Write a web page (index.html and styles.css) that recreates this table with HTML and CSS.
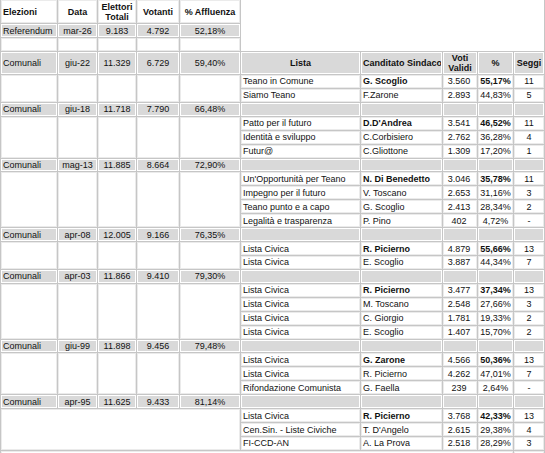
FILE: index.html
```html
<!DOCTYPE html>
<html lang="it">
<head>
<meta charset="utf-8">
<title>Elezioni Teano</title>
<link rel="stylesheet" href="styles.css">
</head>
<body>
<table class="sheet">
  <colgroup>
    <col class="w-ele"><col class="w-data"><col class="w-tot"><col class="w-vot"><col class="w-aff">
    <col class="w-lista"><col class="w-cand"><col class="w-voti"><col class="w-perc"><col class="w-seg">
  </colgroup>
  <tbody>
    <tr class="rh">
      <td class="b">Elezioni</td>
      <td class="b c">Data</td>
      <td class="b c">Elettori<br>Totali</td>
      <td class="b c">Votanti</td>
      <td class="b c">% Affluenza</td>
      <td class="blank" colspan="5" rowspan="3"></td>
    </tr>
    <tr class="r13 g">
      <td>Referendum</td><td class="c">mar-26</td><td class="c">9.183</td><td class="c">4.792</td><td class="c">52,18%</td>
    </tr>
    <tr class="r13">
      <td></td><td></td><td></td><td></td><td></td>
    </tr>

    <tr class="rh2 g">
      <td>Comunali</td><td class="c">giu-22</td><td class="c">11.329</td><td class="c">6.729</td><td class="c">59,40%</td>
      <td class="b c">Lista</td><td class="b c">Canditato Sindaco</td><td class="b c">Voti<br>Validi</td><td class="b c">%</td><td class="b c">Seggi</td>
    </tr>
    <tr class="r">
      <td rowspan="2"></td><td rowspan="2"></td><td rowspan="2"></td><td rowspan="2"></td><td rowspan="2"></td>
      <td>Teano in Comune</td><td class="b">G. Scoglio</td><td class="n">3.560</td><td class="p b">55,17%</td><td class="c">11</td>
    </tr>
    <tr class="r">
      <td>Siamo Teano</td><td>F.Zarone</td><td class="n">2.893</td><td class="p">44,83%</td><td class="c">5</td>
    </tr>

    <tr class="r g">
      <td>Comunali</td><td class="c">giu-18</td><td class="c">11.718</td><td class="c">7.790</td><td class="c">66,48%</td>
      <td></td><td></td><td></td><td></td><td></td>
    </tr>
    <tr class="r">
      <td rowspan="3"></td><td rowspan="3"></td><td rowspan="3"></td><td rowspan="3"></td><td rowspan="3"></td>
      <td>Patto per il futuro</td><td class="b">D.D'Andrea</td><td class="n">3.541</td><td class="p b">46,52%</td><td class="c">11</td>
    </tr>
    <tr class="r">
      <td>Identità e sviluppo</td><td>C.Corbisiero</td><td class="n">2.762</td><td class="p">36,28%</td><td class="c">4</td>
    </tr>
    <tr class="r">
      <td>Futur@</td><td>C.Gliottone</td><td class="n">1.309</td><td class="p">17,20%</td><td class="c">1</td>
    </tr>

    <tr class="r g">
      <td>Comunali</td><td class="c">mag-13</td><td class="c">11.885</td><td class="c">8.664</td><td class="c">72,90%</td>
      <td></td><td></td><td></td><td></td><td></td>
    </tr>
    <tr class="r">
      <td rowspan="4"></td><td rowspan="4"></td><td rowspan="4"></td><td rowspan="4"></td><td rowspan="4"></td>
      <td>Un'Opportunità per Teano</td><td class="b">N. Di Benedetto</td><td class="n">3.046</td><td class="p b">35,78%</td><td class="c">11</td>
    </tr>
    <tr class="r">
      <td>Impegno per il futuro</td><td>V. Toscano</td><td class="n">2.653</td><td class="p">31,16%</td><td class="c">3</td>
    </tr>
    <tr class="r">
      <td>Teano punto e a capo</td><td>G. Scoglio</td><td class="n">2.413</td><td class="p">28,34%</td><td class="c">2</td>
    </tr>
    <tr class="r">
      <td>Legalità e trasparenza</td><td>P. Pino</td><td class="n">402</td><td class="p">4,72%</td><td class="c">-</td>
    </tr>

    <tr class="r g">
      <td>Comunali</td><td class="c">apr-08</td><td class="c">12.005</td><td class="c">9.166</td><td class="c">76,35%</td>
      <td></td><td></td><td></td><td></td><td></td>
    </tr>
    <tr class="r">
      <td rowspan="2"></td><td rowspan="2"></td><td rowspan="2"></td><td rowspan="2"></td><td rowspan="2"></td>
      <td>Lista Civica</td><td class="b">R. Picierno</td><td class="n">4.879</td><td class="p b">55,66%</td><td class="c">13</td>
    </tr>
    <tr class="r">
      <td>Lista Civica</td><td>E. Scoglio</td><td class="n">3.887</td><td class="p">44,34%</td><td class="c">7</td>
    </tr>

    <tr class="r g">
      <td>Comunali</td><td class="c">apr-03</td><td class="c">11.866</td><td class="c">9.410</td><td class="c">79,30%</td>
      <td></td><td></td><td></td><td></td><td></td>
    </tr>
    <tr class="r">
      <td rowspan="4"></td><td rowspan="4"></td><td rowspan="4"></td><td rowspan="4"></td><td rowspan="4"></td>
      <td>Lista Civica</td><td class="b">R. Picierno</td><td class="n">3.477</td><td class="p b">37,34%</td><td class="c">13</td>
    </tr>
    <tr class="r">
      <td>Lista Civica</td><td>M. Toscano</td><td class="n">2.548</td><td class="p">27,66%</td><td class="c">3</td>
    </tr>
    <tr class="r">
      <td>Lista Civica</td><td>C. Giorgio</td><td class="n">1.781</td><td class="p">19,33%</td><td class="c">2</td>
    </tr>
    <tr class="r">
      <td>Lista Civica</td><td>E. Scoglio</td><td class="n">1.407</td><td class="p">15,70%</td><td class="c">2</td>
    </tr>

    <tr class="r g">
      <td>Comunali</td><td class="c">giu-99</td><td class="c">11.898</td><td class="c">9.456</td><td class="c">79,48%</td>
      <td></td><td></td><td></td><td></td><td></td>
    </tr>
    <tr class="r">
      <td rowspan="3"></td><td rowspan="3"></td><td rowspan="3"></td><td rowspan="3"></td><td rowspan="3"></td>
      <td>Lista Civica</td><td class="b">G. Zarone</td><td class="n">4.566</td><td class="p b">50,36%</td><td class="c">13</td>
    </tr>
    <tr class="r">
      <td>Lista Civica</td><td>R. Picierno</td><td class="n">4.262</td><td class="p">47,01%</td><td class="c">7</td>
    </tr>
    <tr class="r">
      <td>Rifondazione Comunista</td><td>G. Faella</td><td class="n">239</td><td class="p">2,64%</td><td class="c">-</td>
    </tr>

    <tr class="r g">
      <td>Comunali</td><td class="c">apr-95</td><td class="c">11.625</td><td class="c">9.433</td><td class="c">81,14%</td>
      <td></td><td></td><td></td><td></td><td></td>
    </tr>
    <tr class="r">
      <td colspan="5" rowspan="3"></td>
      <td>Lista Civica</td><td class="b">R. Picierno</td><td class="n">3.768</td><td class="p b">42,33%</td><td class="c">13</td>
    </tr>
    <tr class="r">
      <td>Cen.Sin. - Liste Civiche</td><td>T. D'Angelo</td><td class="n">2.615</td><td class="p">29,38%</td><td class="c">4</td>
    </tr>
    <tr class="r">
      <td>FI-CCD-AN</td><td>A. La Prova</td><td class="n">2.518</td><td class="p">28,29%</td><td class="c">3</td>
    </tr>

    <tr class="r">
      <td colspan="9"></td><td></td>
    </tr>
  </tbody>
</table>
</body>
</html>
```

FILE: styles.css
```css
html, body {
  margin: 0;
  padding: 0;
  background: #ffffff;
  overflow: hidden;
}

.sheet {
  border-collapse: separate;
  border-spacing: 1px;
  background: #c6c6c6;
  table-layout: fixed;
  width: 545px;
  margin-top: -1px;
  font-family: "Liberation Sans", Arial, sans-serif;
  font-size: 9px;
  line-height: 10px;
  color: #000000;
}

.w-ele { width: 56px; }
.w-data { width: 39px; }
.w-tot { width: 38px; }
.w-vot { width: 42px; }
.w-aff { width: 60px; }
.w-lista { width: 119px; }
.w-cand { width: 81px; }
.w-voti { width: 34px; }
.w-perc { width: 35px; }
.w-seg { width: 30px; }

.sheet td {
  border: 1px solid #ebebeb;
  background: #ffffff;
  padding: 0 1px;
  white-space: nowrap;
  overflow: hidden;
  vertical-align: middle;
  text-align: left;
  color: #111111;
}

.sheet td.blank {
  border-color: #ffffff;
}

.sheet tr.g td {
  background: #d9d9d9;
  border-color: #ffffff;
}

.rh { height: 23px; }
.r13 { height: 13px; }
.rh2 { height: 22px; }
.r { height: 12.93px; }

.sheet td.c { text-align: center; }
.sheet td.n { text-align: center; padding-right: 3px; }
.sheet td.p { text-align: center; }
.sheet td.b { font-weight: bold; }
```
